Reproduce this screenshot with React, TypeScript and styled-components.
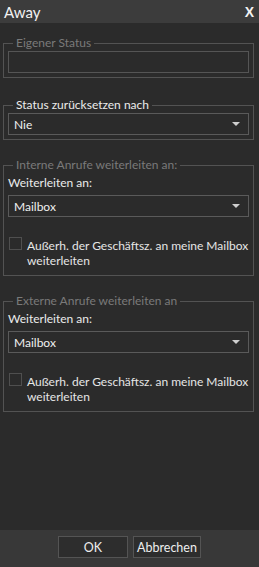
import React from "react";
import styled, { createGlobalStyle } from "styled-components";

const GlobalStyle = createGlobalStyle`
  html, body {
    margin: 0;
    padding: 0;
    background: #2b2b2b;
  }
  body {
    font-family: Lato, "Noto Sans", sans-serif;
    font-size: 12px;
    color: #e6e6e6;
  }
`;

const Window = styled.div`
  width: 259px;
  height: 567px;
  display: flex;
  flex-direction: column;
  background: #2b2b2b;
  overflow: hidden;
`;

const TitleBar = styled.div`
  height: 23px;
  flex: none;
  display: flex;
  align-items: center;
  justify-content: space-between;
  padding: 0 5px 0 4px;
  background: #3c3c3c;
`;

const Title = styled.span`
  font-size: 15px;
  color: #f2f2f2;
`;

const CloseButton = styled.span`
  font-family: "Liberation Sans", sans-serif;
  font-size: 14px;
  font-weight: bold;
  color: #f2f2f2;
`;

const Content = styled.div`
  flex: 1;
  padding: 12px 5px 0 3px;
`;

const Group = styled.fieldset<{ $gap?: number }>`
  margin: ${(p) => p.$gap ?? 0}px 0 0;
  padding: 0 4px 4px;
  border: 1px solid #535353;
  min-width: 0;
`;

const Legend = styled.legend<{ $disabled?: boolean }>`
  margin-left: 5px;
  padding: 0 3px;
  line-height: 16px;
  color: ${(p) => (p.$disabled ? "#7a7a7a" : "#ececec")};
`;

const TextInput = styled.div`
  height: 20px;
  border: 1px solid #555;
  background: #2b2b2b;
`;

const FieldLabel = styled.div`
  line-height: 15px;
  margin: 2px 0 5px 0;
  color: #ececec;
`;

const Select = styled.div`
  height: 20px;
  border: 1px solid #5a5a5a;
  background: #2b2b2b;
  display: flex;
  align-items: center;
  justify-content: space-between;
  padding: 0 8px 0 5px;
  color: #f0f0f0;
`;

const Caret = styled.span`
  width: 0;
  height: 0;
  border-left: 4px solid transparent;
  border-right: 4px solid transparent;
  border-top: 4px solid #cfcfcf;
`;

const CheckRow = styled.label`
  display: flex;
  align-items: flex-start;
  gap: 5px;
  margin: 20px 0 3px 1px;
  line-height: 15px;
  color: #e6e6e6;
`;

const CheckText = styled.span`
  padding-top: 1px;
`;

const CheckBox = styled.span`
  flex: none;
  width: 11px;
  height: 11px;
  border: 1px solid #4f4f4f;
  background: #2b2b2b;
`;

const Footer = styled.div`
  height: 31px;
  flex: none;
  display: flex;
  align-items: flex-start;
  justify-content: center;
  gap: 5px;
  padding-top: 6px;
  background: #383838;
`;

const Button = styled.button<{ $width: number }>`
  width: ${(p) => p.$width}px;
  height: 22px;
  padding: 0;
  border: 1px solid #545454;
  background: #2d2d2d;
  color: #ededed;
  font-family: Lato, "Noto Sans", sans-serif;
  font-size: 12.5px;
`;

const ForwardGroup = ({ title }: { title: string }) => (
  <Group $gap={17}>
    <Legend $disabled>{title}</Legend>
    <FieldLabel>Weiterleiten an:</FieldLabel>
    <Select>
      Mailbox
      <Caret />
    </Select>
    <CheckRow>
      <CheckBox />
      <CheckText>Außerh. der Geschäftsz. an meine Mailbox weiterleiten</CheckText>
    </CheckRow>
  </Group>
);

export default function App() {
  return (
    <>
      <GlobalStyle />
      <Window>
        <TitleBar>
          <Title>Away</Title>
          <CloseButton>X</CloseButton>
        </TitleBar>
        <Content>
          <Group>
            <Legend $disabled>Eigener Status</Legend>
            <TextInput />
          </Group>
          <Group $gap={19}>
            <Legend>Status zurücksetzen nach</Legend>
            <Select>
              Nie
              <Caret />
            </Select>
          </Group>
          <ForwardGroup title="Interne Anrufe weiterleiten an:" />
          <ForwardGroup title="Externe Anrufe weiterleiten an" />
        </Content>
        <Footer>
          <Button $width={70}>OK</Button>
          <Button $width={68}>Abbrechen</Button>
        </Footer>
      </Window>
    </>
  );
}
